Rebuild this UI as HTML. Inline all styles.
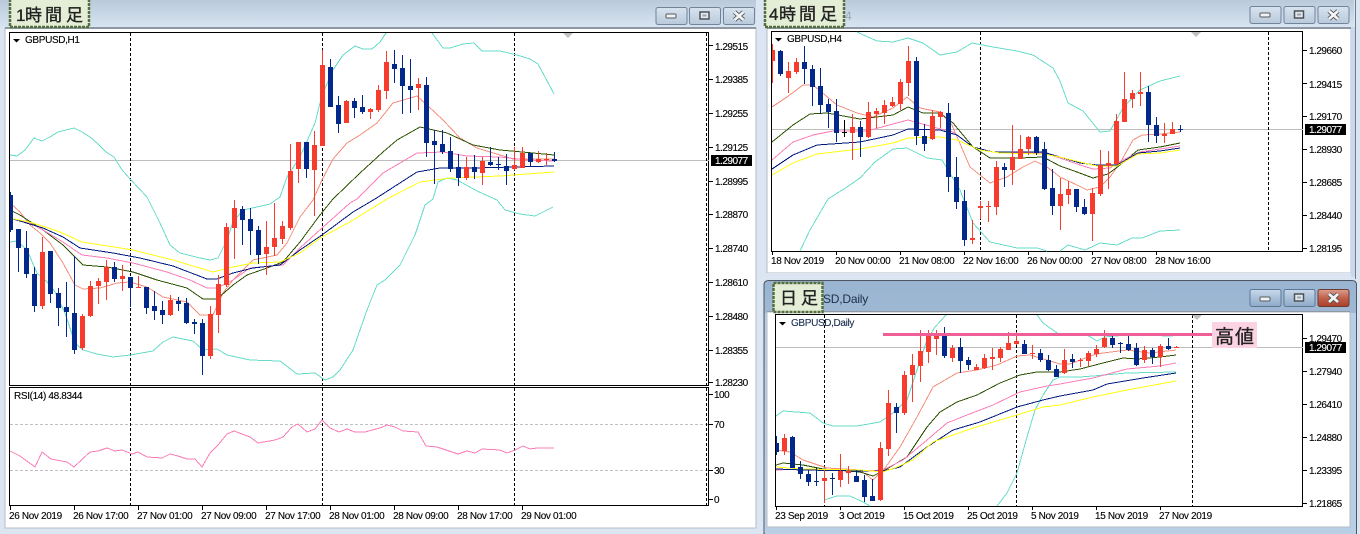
<!DOCTYPE html>
<html lang="ja"><head><meta charset="utf-8"><title>GBPUSD</title>
<style>
html,body{margin:0;padding:0;background:#dbe6f2;width:1360px;height:534px;overflow:hidden}
svg{display:block}
text{font-family:"Liberation Sans","Noto Sans CJK JP",sans-serif;font-size:10px;letter-spacing:-.35px;fill:#000;stroke:#000;stroke-width:.12px}
.pr{letter-spacing:-.5px}
.w{fill:#fff;stroke:#fff;letter-spacing:-.5px}
.jp{font-family:"Liberation Sans","Noto Sans CJK JP",sans-serif;font-size:17px;letter-spacing:0;fill:#222;stroke:#222;stroke-width:.35px}
polyline{fill:none;stroke-width:1;shape-rendering:crispEdges}
.up{stroke:#66dcc8}.sa{stroke:#f58e7c}.gr{stroke:#2c5200}.pk{stroke:#fb7cb8}.nv{stroke:#001a80}.ye{stroke:#ffff10}.rs{stroke:#fb7cb8}
.c{shape-rendering:crispEdges;fill:none}
.rw{stroke:#f73c2e;stroke-width:1}.rb{stroke:#f73c2e;stroke-width:5}
.bw{stroke:#03288c;stroke-width:1}.bb{stroke:#03288c;stroke-width:5}
.dash{stroke:#000;stroke-width:1;stroke-dasharray:3 2;shape-rendering:crispEdges;fill:none}
.gl{stroke:#bdbdbd;stroke-width:1;shape-rendering:crispEdges;fill:none}
.gd{stroke:#c0c0c0;stroke-width:1;stroke-dasharray:3 2;shape-rendering:crispEdges;fill:none}
.fr{fill:#fff;stroke:#000;stroke-width:1;shape-rendering:crispEdges}
.tk{stroke:#000;stroke-width:1;shape-rendering:crispEdges;fill:none}
.lb{fill:#e4edd6;stroke:#566e3e;stroke-width:2.5;stroke-dasharray:3 1}
</style></head><body>
<svg width="1360" height="534" viewBox="0 0 1360 534" xmlns="http://www.w3.org/2000/svg">
<defs>
<linearGradient id="t1" x1="0" y1="0" x2="0" y2="1"><stop offset="0" stop-color="#b9c9db"/><stop offset="1" stop-color="#d7e4f1"/></linearGradient>
<linearGradient id="t3" x1="0" y1="0" x2="0" y2="1"><stop offset="0" stop-color="#99b4d1"/><stop offset="1" stop-color="#c6d9ec"/></linearGradient>
<linearGradient id="b1" x1="0" y1="0" x2="0" y2="1"><stop offset="0" stop-color="#d8e3ef"/><stop offset=".5" stop-color="#c8d6e5"/><stop offset="1" stop-color="#b9cadc"/></linearGradient>
<linearGradient id="b3" x1="0" y1="0" x2="0" y2="1"><stop offset="0" stop-color="#c9d9ea"/><stop offset=".5" stop-color="#a9c0d9"/><stop offset="1" stop-color="#8fabc9"/></linearGradient>
<linearGradient id="b4" x1="0" y1="0" x2="0" y2="1"><stop offset="0" stop-color="#dba090"/><stop offset=".5" stop-color="#c1604a"/><stop offset="1" stop-color="#a8402c"/></linearGradient>
<g id="mn"><rect x="10" y="8" width="10" height="4" rx="1" fill="#f2f2f2" stroke="#555a60"/></g>
<g id="rs"><rect x="10.5" y="5.5" width="9" height="7" fill="#e4e8ec" stroke="#4d5258" stroke-width="1.5"/><rect x="13" y="8" width="4" height="2" fill="#9aa5b1"/></g>
<g id="xx"><path d="M11 5L20 13M20 5L11 13" stroke="#4d5258" stroke-width="4.500"/><path d="M11 5L20 13M20 5L11 13" stroke="#f4f4f4" stroke-width="2.800"/></g>
</defs>

<rect width="1360" height="534" fill="#dbe6f2"/>

<!-- Window 1 -->
<rect x="5" y="28" width="751" height="500" fill="#fff" stroke="#b4bcc5"/>
<rect x="0" y="0" width="756" height="27" fill="url(#t1)"/>
<rect x="5" y="27" width="751" height="2" fill="#8d98a3"/>
<g stroke="#72839a" fill="url(#b1)">
<rect x="656" y="7.5" width="31" height="17" rx="2"/><rect x="689.5" y="7.5" width="31" height="17" rx="2"/><rect x="723.5" y="7.5" width="31" height="17" rx="2"/></g>
<use href="#mn" x="656" y="6"/><use href="#rs" x="689.5" y="6.500"/><use href="#xx" x="723.5" y="7"/>
<rect class="fr" x="9.5" y="32.500" width="699" height="353"/>
<rect class="fr" x="9.500" y="387.500" width="699" height="118"/>
<path class="gl" d="M10 160.500H709"/>
<path class="gd" d="M10 424.500H709M10 470.500H709"/>
<path class="dash" d="M130.500 33V506M322.500 33V506M514.500 33V506M706.500 33V506"/>
<path d="M563 33H573L568 38Z" fill="#c0c0c0"/>
<polyline class="up" points="10,155 17,156 25,150 34,138 42,141 50,137 58,132 66,130 74,128 82,132 90,137 98,144 106,152 114,157 122,170 131,180 147,197 160,223 170,245 180,253 200,258 210,260 218,258 227,240 233,222 243,210 257,207 270,204 280,197 287,177 300,157 315,123 322,95 333,70 343,55 355,46 363,49 372,49 380,42 386,33"/>
<polyline class="up" points="432,33 443,48 450,48 463,44 474,43 482,51 500,51 517,55 530,59 538,64 545,77 554,94"/>
<polyline class="up" points="10,242 17,241 27,250 37,273 47,282 55,292 65,313 75,343 83,350 97,354 113,357 130,355 153,351 163,342 173,337 193,341 203,350 217,349 227,355 250,360 280,361 297,374 315,373 325,380 333,377 340,370 353,350 367,310 377,285 385,280 400,265 415,235 425,205 433,199 438,182 447,178 457,180 477,191 497,200 505,210 520,214 535,216 545,211 553,207"/>
<polyline class="sa" points="10,203 20,212 30,225 40,233 50,243 63,263 75,285 83,289 100,288 117,283 130,282 147,287 163,297 187,302 200,315 213,315 223,293 233,280 253,260 277,255 287,243 300,217 313,200 322,180 333,159 347,143 360,135 377,123 393,103 417,96 428,106 443,120 460,138 477,148 500,155 513,159 533,159 554,159"/>
<polyline class="gr" points="10,210 20,215 43,230 63,245 83,265 107,267 133,272 157,280 187,288 203,299 217,299 233,285 247,275 267,268 283,262 300,242 320,215 333,199 360,173 383,152 397,140 420,127 447,133 473,145 500,150 533,153 554,155"/>
<polyline class="pk" points="10,218 30,223 43,230 63,242 82,255 107,258 133,263 167,272 190,280 207,288 217,288 233,280 250,268 283,265 300,248 322,228 350,203 357,199 383,173 417,153 443,152 467,156 500,157 527,160 554,161"/>
<polyline class="nv" points="10,218 43,228 63,237 80,248 113,253 140,258 173,266 207,279 217,279 233,273 253,268 280,265 300,250 322,235 353,212 375,199 417,172 440,168 473,168 554,166"/>
<polyline class="ye" points="10,218 33,223 60,232 82,242 133,250 173,260 213,272 233,267 253,263 280,262 300,253 320,238 350,222 387,199 420,182 450,178 500,176 554,172"/>
<path class="c rw" d="M42.500 237V309M82.500 314V350M90.500 281V317M98.500 278V304M106.500 260V300M122.500 265V291M138.500 276V288M170.500 295V316M210.500 306V359M218.500 275V333M226.500 223V287M234.500 200V259M266.500 221V275M274.500 203V256M282.500 221V244M290.500 144V230M298.500 142V183M314.500 131V216M322.500 50V146M346.500 100V123M370.500 108V119M378.500 85V112M386.500 51V99M418.500 78V110M466.500 157V180M482.500 157V185M514.500 147V170M522.500 147V168M538.500 151V163M546.500 153V165"/>
<path class="c rb" d="M42.500 252V306M82.500 316V348M90.500 286V316M98.500 281V286M106.500 267V282M122.500 276V279M138.500 287V288M170.500 300V315M210.500 314V356M218.500 284V315M226.500 227V285M234.500 208V228M266.500 247V254M274.500 238V247M282.500 226V239M290.500 171V228M298.500 142V169M314.500 145V170M322.500 65V146M346.500 101V123M370.500 109V112M378.500 90V110M386.500 62V91M418.500 84V88M466.500 167V178M482.500 161V173M514.500 165V169M522.500 153V168M538.500 159V162M546.500 159V160"/>
<path class="c bw" d="M10.500 192V232M18.500 229V272M26.500 231V278M34.500 267V312M50.500 251V303M58.500 288V326M66.500 282V337M74.500 256V354M114.500 262V282M130.500 277V307M146.500 287V314M154.500 291V320M162.500 301V324M178.500 297V311M186.500 298V324M194.500 319V334M202.500 319V375M242.500 206V245M250.500 208V255M258.500 226V264M306.500 142V178M330.500 59V107M338.500 96V133M354.500 98V118M362.500 95V114M394.500 50V83M402.500 55V114M410.500 59V113M426.500 77V157M434.500 130V184M442.500 130V154M450.500 137V172M458.500 154V186M474.500 155V179M490.500 147V166M498.500 157V170M506.500 154V185M530.500 153V167M554.500 152V162"/>
<path class="c bw" style="stroke-width:3" d="M11.500 195V230"/>
<path class="c bb" d="M18.500 229V248M26.500 248V274M34.500 274V306M50.500 251V294M58.500 293V308M66.500 307V312M74.500 313V350M114.500 267V279M130.500 277V288M146.500 287V308M154.500 306V311M162.500 310V315M178.500 301V304M186.500 303V323M194.500 322V324M202.500 323V356M242.500 209V220M250.500 219V231M258.500 230V255M306.500 142V169M330.500 67V107M338.500 105V124M354.500 101V108M362.500 107V112M394.500 64V69M402.500 68V86M410.500 86V90M426.500 85V143M434.500 141V145M442.500 144V152M450.500 151V169M458.500 167V178M474.500 167V172M490.500 162V165M498.500 164V165M506.500 166V171M530.500 153V162M554.500 159V161"/>
<polyline class="rs" points="10,451 20,456 35,467 42,452 51,459 67,462 74,467 90,452 98,451 107,448 115,451 122,450 132,454 138,452 147,457 162,458 170,454 178,456 187,459 195,459 202,467 210,453 218,445 227,434 234,431 250,437 258,443 275,440 283,437 292,427 298,424 307,432 315,429 322,420 330,428 339,432 347,429 355,432 365,432 380,428 387,425 395,427 403,431 418,432 426,446 437,447 458,454 467,451 475,453 482,449 500,450 507,453 515,450 523,446 530,449 537,448 554,448"/>
<path d="M13 39H20L16.500 42.500Z" fill="#000"/>
<text x="25" y="43">GBPUSD,H1</text>
<text x="14" y="399">RSI(14) 48.8344</text>
<path class="tk" d="M709 45.500H713M709 79.500H713M709 113.500H713M709 147.500H713M709 181.500H713M709 214.500H713M709 248.500H713M709 282.500H713M709 316.500H713M709 350.500H713M709 382.500H713M709 394.500H713M709 424.500H713M709 470.500H713M709 499.500H713"/>
<path class="tk" d="M10.500 506V510M74.500 506V510M138.500 506V510M202.500 506V510M266.500 506V510M330.500 506V510M394.500 506V510M458.500 506V510M522.500 506V510"/>
<text class="pr" x="715" y="50">1.29515</text><text class="pr" x="715" y="83">1.29385</text><text class="pr" x="715" y="117">1.29255</text><text class="pr" x="715" y="151">1.29125</text><text class="pr" x="715" y="185">1.28995</text><text class="pr" x="715" y="218">1.28870</text><text class="pr" x="715" y="252">1.28740</text><text class="pr" x="715" y="286">1.28610</text><text class="pr" x="715" y="320">1.28480</text><text class="pr" x="715" y="354">1.28355</text><text class="pr" x="715" y="386">1.28230</text>
<text class="pr" x="714" y="398">100</text><text class="pr" x="714" y="428">70</text><text class="pr" x="714" y="474">30</text><text class="pr" x="714" y="503">0</text>
<rect x="711" y="155" width="41" height="11" fill="#000"/><text class="w" x="715" y="164">1.29077</text>
<text x="9" y="519">26 Nov 2019</text><text x="73" y="519">26 Nov 17:00</text><text x="137" y="519">27 Nov 01:00</text><text x="201" y="519">27 Nov 09:00</text><text x="265" y="519">27 Nov 17:00</text><text x="329" y="519">28 Nov 01:00</text><text x="393" y="519">28 Nov 09:00</text><text x="457" y="519">28 Nov 17:00</text><text x="521" y="519">29 Nov 01:00</text>

<!-- Window 2 -->
<rect x="767" y="27" width="584" height="246" fill="#fff" stroke="#b4bcc5"/>
<rect x="767" y="273" width="589" height="6" fill="#dbe6f2"/>
<rect x="764" y="0" width="590" height="27" fill="url(#t1)"/>
<rect x="767" y="27" width="587" height="2" fill="#8d98a3"/>
<rect x="1351" y="27" width="5" height="250" fill="#c7d9eb"/>
<rect x="1355" y="0" width="1" height="279" fill="#717e8a"/>
<g stroke="#72839a" fill="url(#b1)">
<rect x="1250" y="6.500" width="31" height="17" rx="2"/><rect x="1284" y="6.500" width="31" height="17" rx="2"/><rect x="1318" y="6.500" width="31" height="17" rx="2"/></g>
<use href="#mn" x="1250" y="5"/><use href="#rs" x="1284" y="5.500"/><use href="#xx" x="1318" y="6"/>
<rect class="fr" x="771.500" y="31.500" width="531" height="220"/>
<path class="gl" d="M772 129.500H1303"/>
<path class="dash" d="M980.500 32V251M1268.500 32V251"/>
<path d="M1191 32H1201L1196 37Z" fill="#c0c0c0"/>
<polyline class="up" points="857,32 877,41 893,42 908,38 923,43 940,55 957,52 972,43 993,47 1017,51 1033,55 1053,68 1060,81 1068,103 1083,111 1100,132 1110,131 1123,108 1140,90 1160,81 1180,76"/>
<polyline class="up" points="800,251 810,230 828,199 847,187 860,178 875,162 893,149 907,148 927,158 942,160 960,190 973,223 990,242 1017,248 1037,248 1047,251"/>
<polyline class="up" points="1060,251 1068,245 1085,250 1100,243 1117,245 1132,238 1142,238 1160,231 1180,230"/>
<polyline class="sa" points="772,107 787,97 803,85 813,85 837,105 857,113 873,117 893,108 907,97 920,108 940,112 952,125 970,167 990,183 1007,177 1023,167 1035,161 1047,167 1060,177 1077,185 1087,190 1100,187 1110,177 1120,163 1133,140 1142,135 1160,134 1180,132"/>
<polyline class="gr" points="772,142 793,125 810,114 827,113 860,119 893,115 908,107 923,113 940,113 953,123 973,147 990,158 1020,158 1043,157 1060,166 1077,172 1093,178 1108,174 1120,165 1138,150 1160,147 1180,143"/>
<polyline class="pk" points="772,160 793,142 813,135 833,131 867,131 893,124 908,120 937,128 953,132 973,147 993,152 1020,153 1043,153 1060,158 1080,165 1093,169 1110,168 1123,160 1140,152 1160,149 1180,146"/>
<polyline class="nv" points="772,169 793,155 817,145 860,142 893,135 908,129 940,130 957,135 973,147 993,152 1043,152 1060,157 1080,163 1097,165 1117,165 1138,153 1160,151 1180,148"/>
<polyline class="ye" points="772,175 793,163 817,154 860,149 893,143 908,138 940,137 957,140 980,150 1000,153 1043,154 1060,157 1080,162 1097,166 1117,166 1138,154 1160,153 1180,150"/>
<path class="c rw" d="M772.500 44V83M788.500 62V93M796.500 58V74M852.500 114V160M868.500 102V138M876.500 108V128M884.500 100V124M892.500 97V107M900.500 79V110M908.500 46V96M932.500 110V140M940.500 111V128M972.500 220V244M980.500 201V219M988.500 201V222M996.500 161V215M1012.500 125V185M1020.500 135V159M1028.500 136V155M1060.500 178V230M1068.500 181V204M1092.500 188V241M1100.500 150V196M1108.500 151V189M1116.500 114V165M1124.500 72V122M1132.500 90V108M1140.500 72V106M1164.500 123V143M1172.500 122V134"/>
<path class="c rw" style="stroke-width:3" d="M773.500 50V61"/>
<path class="c rb" d="M788.500 71V78M796.500 62V72M852.500 127V133M868.500 112V137M876.500 111V114M884.500 105V113M892.500 102V106M900.500 82V104M908.500 61V83M932.500 116V139M940.500 112V117M972.500 238V240M980.500 206V208M988.500 206V207M996.500 167V207M1012.500 157V170M1020.500 149V159M1028.500 137V149M1060.500 194V206M1068.500 189V195M1092.500 193V214M1100.500 165V194M1108.500 163V166M1116.500 121V164M1124.500 99V122M1132.500 93V99M1140.500 92V94M1164.500 134V136M1172.500 129V134"/>
<path class="c bw" d="M780.500 50V76M804.500 46V84M812.500 65V106M820.500 68V114M828.500 99V128M836.500 99V142M860.500 121V157M916.500 57V145M924.500 124V151M948.500 103V192M956.500 157V209M964.500 190V246M1004.500 163V187M1036.500 136V155M1044.500 142V190M1052.500 169V215M1076.500 189V212M1084.500 199V215M1148.500 86V142M1156.500 117V143M1180.500 125V132"/>
<path class="c bb" d="M780.500 51V74M804.500 62V69M812.500 69V87M820.500 86V105M828.500 104V112M836.500 111V133M860.500 127V137M916.500 61V136M924.500 136V144M948.500 113V177M956.500 177V202M964.500 201V240M1004.500 167V170M1036.500 137V153M1044.500 149V189M1052.500 188V206M1076.500 189V207M1084.500 207V214M1148.500 92V125M1156.500 125V136M1180.500 129V130"/>
<path class="c" stroke="#000" d="M844.500 120V137M842 132.500H847"/>
<path d="M775 38H782L778.500 41.500Z" fill="#000"/>
<text x="787" y="42">GBPUSD,H4</text>
<path class="tk" d="M1303 50.500H1307M1303 83.500H1307M1303 116.500H1307M1303 149.500H1307M1303 182.500H1307M1303 215.500H1307M1303 248.500H1307"/>
<path class="tk" d="M772.500 251V255M836.500 251V255M900.500 251V255M964.500 251V255M1028.500 251V255M1092.500 251V255M1156.500 251V255"/>
<text class="pr" x="1309" y="54">1.29660</text><text class="pr" x="1309" y="88">1.29415</text><text class="pr" x="1309" y="120">1.29170</text><text class="pr" x="1309" y="153">1.28930</text><text class="pr" x="1309" y="186">1.28685</text><text class="pr" x="1309" y="219">1.28440</text><text class="pr" x="1309" y="252">1.28195</text>
<rect x="1305" y="124" width="41" height="11" fill="#000"/><text class="w" x="1309" y="133">1.29077</text>
<text x="771" y="264">18 Nov 2019</text><text x="835" y="264">20 Nov 00:00</text><text x="899" y="264">21 Nov 08:00</text><text x="963" y="264">22 Nov 16:00</text><text x="1027" y="264">26 Nov 00:00</text><text x="1091" y="264">27 Nov 08:00</text><text x="1155" y="264">28 Nov 16:00</text>
<text x="845" y="20" style="font-size:12px;fill:#9aa5b0;stroke:none">4</text>

<!-- Window 3 -->
<path d="M764 534V285Q764 280.500 769 280.500H1352Q1356.500 280.500 1356.500 285V534Z" fill="url(#t3)" stroke="#4c5560"/>
<rect x="765" y="313" width="591" height="221" fill="#b8cfe6"/>
<rect x="767" y="312" width="583" height="215" fill="#fff" stroke="#b4bcc5"/>
<rect x="767" y="311" width="583" height="1" fill="#8d98a3"/>
<g stroke="#5d7796" fill="url(#b3)">
<rect x="1250" y="289.500" width="31" height="17" rx="2"/><rect x="1284" y="289.500" width="31" height="17" rx="2"/></g>
<rect x="1318" y="289.500" width="31" height="17" rx="2" fill="url(#b4)" stroke="#6e3a30"/>
<use href="#mn" x="1250" y="289"/><use href="#rs" x="1284" y="288.500"/><use href="#xx" x="1318" y="289"/>
<rect class="fr" x="775.500" y="314.500" width="527" height="192"/>
<path class="gl" d="M776 347.500H1303"/>
<path class="dash" d="M824.500 315V506M1016.500 315V506M1192.500 315V506"/>
<path d="M1192 315H1202L1197 320Z" fill="#c0c0c0"/>
<polyline class="up" points="776,416 783,411 810,413 823,423 833,426 857,426 880,422 893,413 907,400 917,370 927,340 935,327 946,315"/>
<polyline class="up" points="1037,315 1043,323 1060,335 1087,335 1097,341 1105,337 1127,335 1173,336"/>
<polyline class="up" points="824,500 837,496 850,496 863,502 870,506"/>
<polyline class="up" points="997,506 1007,493 1017,473 1027,437 1035,410 1043,395 1053,380 1060,377 1080,377 1093,376 1127,373 1176,372"/>
<polyline class="sa" points="776,450 790,452 803,460 827,468 860,470 873,480 885,468 900,447 917,417 933,387 957,373 977,370 997,365 1017,356 1030,355 1047,360 1060,364 1070,364 1093,355 1103,353 1127,350 1150,353 1176,350"/>
<polyline class="gr" points="776,465 783,463 803,465 823,469 860,472 873,476 885,470 907,457 927,427 940,412 957,402 977,395 1000,383 1020,375 1037,372 1060,372 1080,369 1103,363 1123,358 1137,359 1160,357 1176,355"/>
<polyline class="pk" points="776,470 803,469 860,471 883,470 903,460 927,440 947,423 967,415 993,405 1020,392 1047,386 1060,384 1093,378 1127,369 1160,366 1176,363"/>
<polyline class="nv" points="776,469 803,470 860,471 883,471 900,467 927,447 953,430 980,422 1017,407 1043,400 1060,396 1093,390 1107,384 1143,378 1176,373"/>
<polyline class="ye" points="776,467 803,469 860,470 883,472 897,467 913,460 933,442 973,428 1017,415 1043,407 1060,405 1093,397 1127,390 1176,381"/>
<path class="c rw" d="M784.500 434V455M824.500 470V503M840.500 454V487M848.500 466V484M880.500 442V501M888.500 390V456M904.500 371V415M912.500 354V402M920.500 330V382M928.500 330V363M936.500 330V355M952.500 345V362M976.500 364V370M984.500 354V369M992.500 348V370M1000.500 347V362M1008.500 332V350M1016.500 332V345M1032.500 345V359M1064.500 349V374M1080.500 358V367M1088.500 351V366M1096.500 345V357M1104.500 330V348M1144.500 346V363M1160.500 344V367M1176.500 346V348"/>
<path class="c rb" d="M784.500 438V451M824.500 478V481M840.500 471V480M848.500 471V473M880.500 448V500M888.500 403V449M904.500 375V413M912.500 365V375M920.500 351V366M928.500 333V352M936.500 335V339M952.500 348V358M976.500 367V370M984.500 358V368M992.500 357V359M1000.500 349V358M1008.500 343V350M1016.500 341V344M1032.500 353V354M1064.500 360V373M1080.500 360V361M1088.500 353V361M1096.500 349V354M1104.500 338V347M1144.500 350V360M1160.500 346V357M1176.500 347V348"/>
<path class="c bw" d="M776.500 436V455M792.500 436V468M800.500 461V479M808.500 470V486M816.500 468V486M832.500 473V495M856.500 470V482M864.500 475V502M872.500 479V501M896.500 403V433M944.500 327V358M960.500 338V373M968.500 357V370M1024.500 340V354M1040.500 349V362M1048.500 355V371M1056.500 365V377M1072.500 354V368M1112.500 335V348M1120.500 342V353M1128.500 336V351M1136.500 343V366M1152.500 348V364M1168.500 338V350"/>
<path class="c bw" style="stroke-width:3" d="M777.500 443V452"/>
<path class="c bb" d="M792.500 437V468M800.500 467V474M808.500 474V482M816.500 481V482M832.500 478V479M856.500 476V482M864.500 480V497M872.500 496V501M896.500 407V413M944.500 335V356M960.500 347V361M968.500 360V365M1024.500 344V354M1040.500 353V360M1048.500 360V370M1056.500 369V377M1072.500 359V362M1112.500 338V345M1120.500 343V344M1128.500 344V350M1136.500 348V365M1152.500 350V357M1168.500 346V349"/>
<rect x="883" y="333" width="329" height="3" fill="#ef5e96"/>
<rect x="1212" y="322" width="45" height="26" fill="#fcd3e3"/>
<text class="jp" x="1215" y="343" style="font-size:19px">高</text><text class="jp" x="1235" y="343" style="font-size:19px">値</text>
<path d="M779 322H786L782.500 325.500Z" fill="#000"/>
<text x="791" y="326" style="fill:#1c3050;stroke:#1c3050">GBPUSD,Daily</text>
<path class="tk" d="M1303 338.500H1307M1303 371.500H1307M1303 404.500H1307M1303 437.500H1307M1303 470.500H1307M1303 503.500H1307"/>
<path class="tk" d="M776.500 506V510M840.500 506V510M904.500 506V510M968.500 506V510M1032.500 506V510M1096.500 506V510M1160.500 506V510"/>
<text class="pr" x="1309" y="342">1.29470</text><text class="pr" x="1309" y="375">1.27940</text><text class="pr" x="1309" y="408">1.26410</text><text class="pr" x="1309" y="441">1.24880</text><text class="pr" x="1309" y="474">1.23395</text><text class="pr" x="1309" y="507">1.21865</text>
<rect x="1305" y="342" width="41" height="11" fill="#000"/><text class="w" x="1309" y="351">1.29077</text>
<text x="775" y="519">23 Sep 2019</text><text x="839" y="519">3 Oct 2019</text><text x="903" y="519">15 Oct 2019</text><text x="967" y="519">25 Oct 2019</text><text x="1031" y="519">5 Nov 2019</text><text x="1095" y="519">15 Nov 2019</text><text x="1159" y="519">27 Nov 2019</text>
<text x="823" y="303" style="font-size:12px;letter-spacing:-.2px;fill:#1e2f45;stroke:none">SD,Daily</text>

<!-- Overlay labels -->
<rect class="lb" x="10" y="-2" width="79" height="29"/>
<text class="jp" x="16" y="21">1</text><text class="jp" x="25" y="21">時</text><text class="jp" x="45" y="21">間</text><text class="jp" x="66" y="21">足</text>
<rect class="lb" x="765" y="-2" width="79" height="29"/>
<text class="jp" x="769" y="20">4</text><text class="jp" x="779" y="20">時</text><text class="jp" x="799" y="20">間</text><text class="jp" x="820" y="20">足</text>
<rect class="lb" x="773.500" y="283" width="49" height="29"/>
<text class="jp" x="780" y="304">日</text><text class="jp" x="801" y="304">足</text>
</svg>
</body></html>
